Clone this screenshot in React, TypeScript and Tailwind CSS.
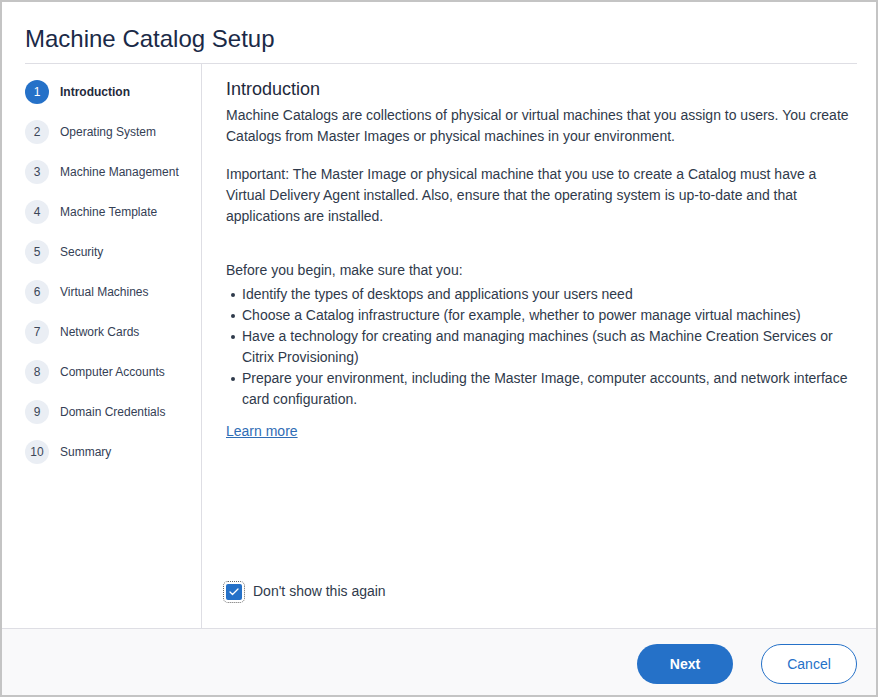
import { Check } from 'lucide-react'

const steps = [
  'Introduction',
  'Operating System',
  'Machine Management',
  'Machine Template',
  'Security',
  'Virtual Machines',
  'Network Cards',
  'Computer Accounts',
  'Domain Credentials',
  'Summary',
]

const bullets = [
  'Identify the types of desktops and applications your users need',
  'Choose a Catalog infrastructure (for example, whether to power manage virtual machines)',
  'Have a technology for creating and managing machines (such as Machine Creation Services or Citrix Provisioning)',
  'Prepare your environment, including the Master Image, computer accounts, and network interface card configuration.',
]

export default function App() {
  return (
    <div
      className="w-[878px] h-[697px] border-2 border-[#c4c4c4] bg-white flex flex-col text-[#2f3a4b]"
      style={{ fontFamily: '"Liberation Sans", Arial, sans-serif' }}
    >
      {/* header */}
      <div className="shrink-0 ml-[23px] mr-[19px] h-[62px] border-b border-[#dedee4] pt-[21px]">
        <h1 className="text-[24px] leading-[32px] text-[#1b2a47]">Machine Catalog Setup</h1>
      </div>

      <div className="flex-1 flex min-h-0">
        {/* steps */}
        <nav className="w-[200px] shrink-0 border-r border-[#dedee4] pl-[23px] pr-[16px] pt-[16px] flex flex-col gap-[16px]">
          {steps.map((s, i) => (
            <div key={s} className="flex items-center gap-[11px] h-[24px]">
              <span
                className={`w-[24px] h-[24px] shrink-0 rounded-full flex items-center justify-center text-[12px] ${
                  i === 0 ? 'bg-[#2571c8] text-white' : 'bg-[#eaeef4] text-[#3b4658]'
                }`}
              >
                {i + 1}
              </span>
              <span
                className={`text-[12px] whitespace-nowrap ${i === 0 ? 'font-bold text-[#1f2a3c]' : 'text-[#344055]'}`}
              >
                {s}
              </span>
            </div>
          ))}
        </nav>

        {/* content */}
        <div className="flex-1 flex flex-col pl-[24px] pr-[20px] pt-[12px] pb-[26px] text-[14px] leading-[21px]">
          <h2 className="text-[18px] leading-[26px] text-[#1f2a3c]">Introduction</h2>
          <p className="mt-[3px]">
            Machine Catalogs are collections of physical or virtual machines that you assign to users. You create
            Catalogs from Master Images or physical machines in your environment.
          </p>
          <p className="mt-[17px]">
            Important: The Master Image or physical machine that you use to create a Catalog must have a Virtual
            Delivery Agent installed. Also, ensure that the operating system is up-to-date and that applications are
            installed.
          </p>
          <p className="mt-[33px]">Before you begin, make sure that you:</p>
          <ul className="mt-[3px]">
            {bullets.map(b => (
              <li key={b} className="flex">
                <span className="w-[16px] shrink-0 flex justify-center pt-[9px] pr-[3px]">
                  <span className="w-[4px] h-[4px] rounded-full bg-[#2f3a4b]" />
                </span>
                <span>{b}</span>
              </li>
            ))}
          </ul>
          <a className="mt-[11px] self-start underline text-[#2f6db5]" href="#">
            Learn more
          </a>

          <label className="mt-auto flex items-center gap-[11px] self-start">
            <span className="w-[16px] h-[16px] rounded-[2px] bg-[#2571c8] flex items-center justify-center outline-1 outline-dotted outline-[#666] outline-offset-2">
              <Check className="w-[12px] h-[12px] text-white" strokeWidth={2.5} />
            </span>
            <span>Don&apos;t show this again</span>
          </label>
        </div>
      </div>

      {/* footer */}
      <div className="shrink-0 h-[67px] border-t border-[#dedee4] bg-[#f9f9fa] flex items-start justify-end gap-[28px] pt-[15px] pr-[19px]">
        <button className="w-[96px] h-[40px] rounded-full bg-[#2571c8] text-white text-[14px] font-bold">Next</button>
        <button className="w-[96px] h-[40px] rounded-full border border-[#2571c8] bg-white text-[#2571c8] text-[14px]">
          Cancel
        </button>
      </div>
    </div>
  )
}
